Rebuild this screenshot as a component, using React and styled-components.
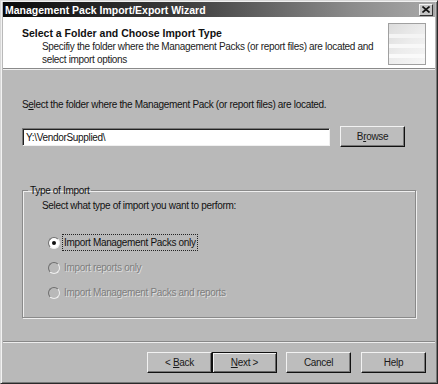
import React from 'react'
import styled, { createGlobalStyle } from 'styled-components'

const Global = createGlobalStyle`
  *, *::before, *::after { box-sizing: border-box; }
  html, body { margin: 0; padding: 0; background: #b9b9b9; }
  body {
    font-family: "Liberation Sans", Arial, sans-serif;
    font-size: 10px;
    letter-spacing: -0.32px;
    color: #111;
  }
`

const Window = styled.div`
  width: 438px;
  height: 384px;
  background: #b9b9b9;
  border: 1px solid #d8d8d8;
  border-right-color: #2a2a2a;
  border-bottom-color: #2a2a2a;
  box-shadow: inset 1px 1px 0 #f2f2f2, inset -1px -1px 0 #777;
  padding: 1px 2px 2px 2px;
  display: flex;
  flex-direction: column;
`

const TitleBar = styled.div`
  height: 15px;
  flex: none;
  display: flex;
  align-items: center;
  justify-content: space-between;
  padding: 0 2px;
  background: linear-gradient(to right, #0a0a0a 0%, #3a3a3a 40%, #8a8a8a 80%, #a8a8a8 100%);
`

const TitleText = styled.span`
  color: #fff;
  font-weight: bold;
  font-size: 10.5px;
  letter-spacing: 0;
`

const CloseBox = styled.div`
  width: 14px;
  height: 12px;
  background: #c4c4c4;
  border: 1px solid #f4f4f4;
  border-right-color: #333;
  border-bottom-color: #333;
  display: flex;
  align-items: center;
  justify-content: center;
`

const Header = styled.div`
  height: 52px;
  flex: none;
  background: #fff;
  border-bottom: 1px solid #8a8a8a;
  box-shadow: 0 1px 0 #f0f0f0;
  display: flex;
  justify-content: space-between;
  padding: 0 9px 0 19px;
`

const HeaderText = styled.div`
  padding-top: 10px;
`

const HeaderTitle = styled.div`
  font-weight: bold;
  font-size: 10.5px;
  letter-spacing: 0;
  line-height: 13px;
`

const HeaderSub = styled.div`
  padding-left: 20px;
  line-height: 13px;
  color: #222;
`

const HeaderIcon = styled.div`
  width: 38px;
  height: 42px;
  margin-top: 6px;
  border: 1px solid #a0a0a0;
  background:
    linear-gradient(to bottom, transparent 0 10px, #f4f4f4 10px 14px, transparent 14px 20px, #f8f8f8 20px 24px, transparent 24px 30px, #fafafa 30px 34px, transparent 34px),
    linear-gradient(135deg, #dcdcdc, #ececec 50%, #f6f6f6);
`

const Body = styled.div`
  flex: 1;
  padding: 29px 9px 0 19px;
  display: flex;
  flex-direction: column;
`

const Label = styled.div`
  line-height: 13px;
`

const PathRow = styled.div`
  display: flex;
  align-items: center;
  gap: 10px;
  margin-top: 15px;
`

const TextField = styled.div`
  width: 308px;
  height: 18px;
  background: #fff;
  border: 1px solid #7a7a7a;
  border-right-color: #f0f0f0;
  border-bottom-color: #f0f0f0;
  box-shadow: inset 1px 1px 0 #222;
  padding: 2px 3px;
  line-height: 13px;
`

const Button = styled.div`
  width: 65px;
  height: 21px;
  background: #bdbdbd;
  border: 1px solid ${p => (p.primary ? '#111' : '#f2f2f2')};
  border-right-color: #111;
  border-bottom-color: #111;
  box-shadow: ${p =>
    p.primary
      ? 'inset 1px 1px 0 #f2f2f2, inset -1px -1px 0 #666'
      : 'inset -1px -1px 0 #777'};
  display: flex;
  align-items: center;
  justify-content: center;
  color: #1a1a1a;
  white-space: pre;
`

const GroupBox = styled.fieldset`
  margin: 37px 10px 0 0;
  padding: 0 0 0 19px;
  height: 134px;
  border: 1px solid #8a8a8a;
  box-shadow: 1px 1px 0 #efefef, inset 1px 1px 0 #efefef;
  display: flex;
  flex-direction: column;
`

const Legend = styled.legend`
  padding: 0 2px;
  margin-left: -14px;
  line-height: 13px;
`

const Prompt = styled.div`
  margin-top: 2px;
  line-height: 13px;
`

const RadioRow = styled.div`
  display: flex;
  align-items: center;
  gap: 3px;
  margin-top: ${p => p.gap}px;
  padding-left: 6px;
  color: ${p => (p.disabled ? '#7e7e7e' : '#111')};
  text-shadow: ${p => (p.disabled ? '1px 1px 0 #dedede' : 'none')};
`

const RadioDot = styled.span`
  width: 12px;
  height: 12px;
  border-radius: 50%;
  background: ${p => (p.disabled ? '#b9b9b9' : '#fff')};
  border: 1px solid #6e6e6e;
  border-right-color: #f0f0f0;
  border-bottom-color: #f0f0f0;
  display: flex;
  align-items: center;
  justify-content: center;
  &::after {
    content: '';
    width: 4px;
    height: 4px;
    border-radius: 50%;
    background: ${p => (p.checked ? '#111' : 'transparent')};
  }
`

const RadioLabel = styled.span`
  line-height: 13px;
  padding: 1px 1px;
  outline: ${p => (p.focused ? '1px dotted #222' : 'none')};
`

const Footer = styled.div`
  height: 40px;
  flex: none;
  border-top: 1px solid #888;
  box-shadow: inset 0 1px 0 #ededed;
  display: flex;
  justify-content: flex-end;
  align-items: flex-start;
  padding: 10px 9px 0 0;
  gap: 9px;
  & > :last-child {
    margin-left: 1px;
  }
`

const BackNext = styled.div`
  display: flex;
`

const U = styled.u`
  text-decoration: underline;
`

export default function App() {
  return (
    <>
      <Global />
      <Window>
        <TitleBar>
          <TitleText>Management Pack Import/Export Wizard</TitleText>
          <CloseBox>
            <svg width="8" height="7" viewBox="0 0 8 7">
              <path d="M0.5 0.5 L7.5 6.5 M7.5 0.5 L0.5 6.5" stroke="#111" strokeWidth="1.6" />
            </svg>
          </CloseBox>
        </TitleBar>
        <Header>
          <HeaderText>
            <HeaderTitle>Select a Folder and Choose Import Type</HeaderTitle>
            <HeaderSub>
              Specifiy the folder where the Management Packs (or report files) are located and
              <br />
              select import options
            </HeaderSub>
          </HeaderText>
          <HeaderIcon />
        </Header>
        <Body>
          <Label>
            S<U>e</U>lect the folder where the Management Pack (or report files) are located.
          </Label>
          <PathRow>
            <TextField>Y:\VendorSupplied\</TextField>
            <Button>
              B<U>r</U>owse
            </Button>
          </PathRow>
          <GroupBox>
            <Legend>Type of Import</Legend>
            <Prompt>Select what type of import you want to perform:</Prompt>
            <RadioRow gap={23}>
              <RadioDot checked />
              <RadioLabel focused>Import Management Packs only</RadioLabel>
            </RadioRow>
            <RadioRow gap={10} disabled>
              <RadioDot disabled />
              <RadioLabel>Import reports only</RadioLabel>
            </RadioRow>
            <RadioRow gap={10} disabled>
              <RadioDot disabled />
              <RadioLabel>Import Management Packs and reports</RadioLabel>
            </RadioRow>
          </GroupBox>
        </Body>
        <Footer>
          <BackNext>
            <Button>
              {'< '}
              <U>B</U>ack
            </Button>
            <Button primary>
              <U>N</U>ext {'>'}
            </Button>
          </BackNext>
          <Button>Cancel</Button>
          <Button>Help</Button>
        </Footer>
      </Window>
    </>
  )
}
